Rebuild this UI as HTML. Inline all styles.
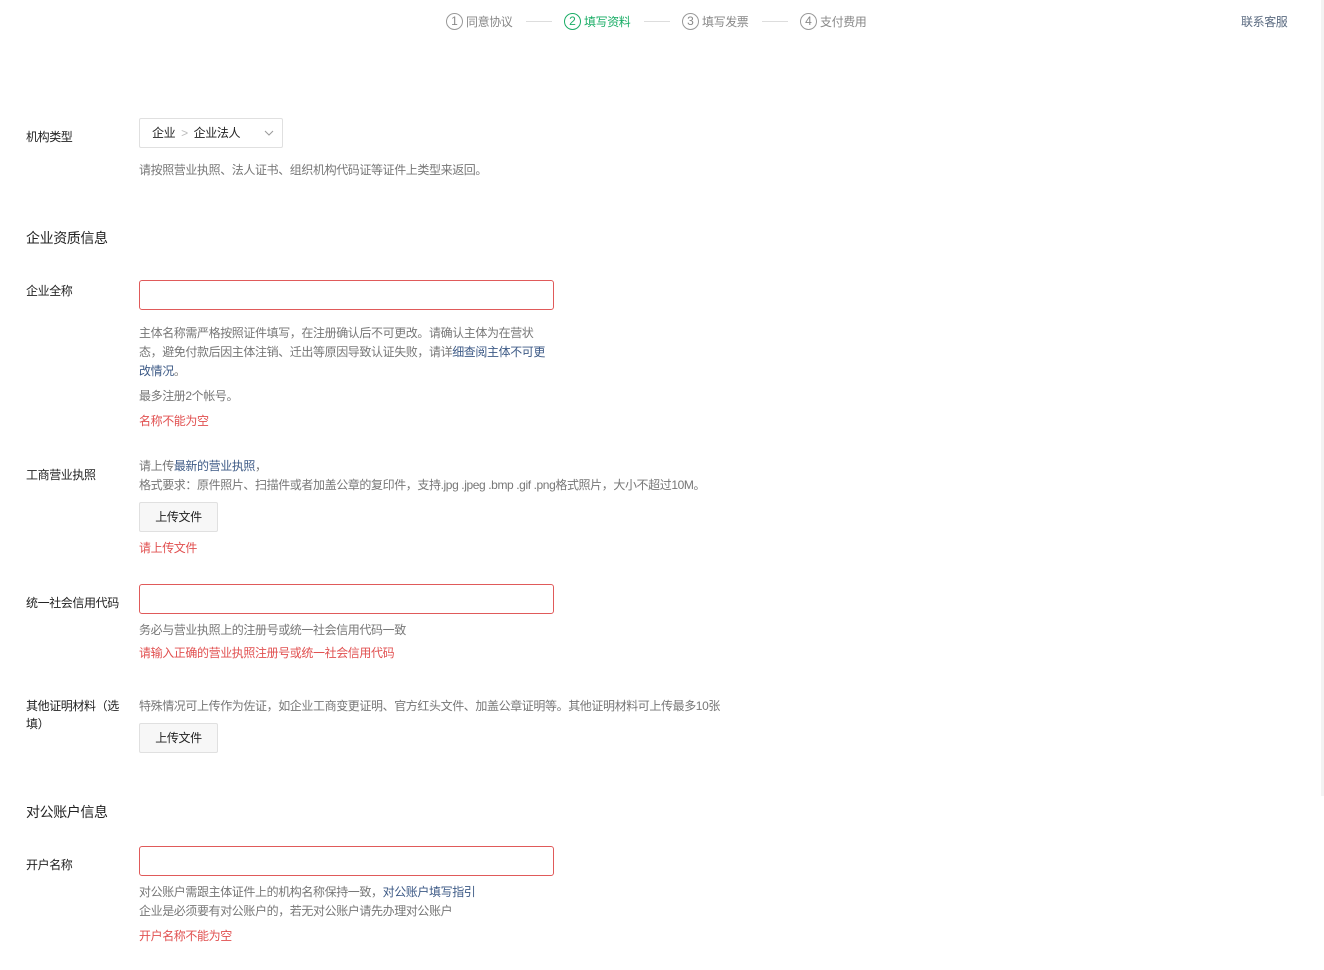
<!DOCTYPE html>
<html><head><meta charset="utf-8">
<style>
*{margin:0;padding:0;box-sizing:border-box}
body{width:1324px;height:970px;background:#fff;position:relative;overflow:hidden;font-family:"Liberation Sans","Noto Sans CJK SC",sans-serif;font-size:12px;color:#353535;letter-spacing:-0.4px}
.a{position:absolute;white-space:nowrap}
.lbl{color:#222;font-size:12px}
.tip{color:#777;font-size:12px}
.err{color:#e15050;font-size:12px}
.h{font-size:14px;color:#222}
.inp{position:absolute;left:139px;width:415px;height:30px;border:1px solid #e05a5a;border-radius:3px}
.btn{position:absolute;left:139px;width:79px;height:30px;border:1px solid #e0e0e0;border-radius:2px;background:#f7f7f7;font-size:12px;color:#222;text-align:center;line-height:28px}
.step{position:absolute;top:13px;font-size:12px;color:#888;display:flex;align-items:center}
.c{display:inline-block;width:17px;height:17px;border:1px solid #999;border-radius:50%;text-align:center;line-height:15px;font-size:12px;margin-right:3px;letter-spacing:0}
.ln{position:absolute;top:21px;width:26px;height:1px;background:#ddd}
.link{color:#3d5a86}
</style></head><body>
<div class="step" style="left:446px"><span class="c">1</span>同意协议</div>
<div class="ln" style="left:526px"></div>
<div class="step" style="left:564px;color:#1aad66"><span class="c" style="border-color:#1aad66">2</span>填写资料</div>
<div class="ln" style="left:644px"></div>
<div class="step" style="left:682px"><span class="c">3</span>填写发票</div>
<div class="ln" style="left:762px"></div>
<div class="step" style="left:800px"><span class="c">4</span>支付费用</div>
<div class="a" style="left:1241px;top:13px;color:#5a6a80;font-size:12px">联系客服</div>
<div class="a" style="left:1321px;top:0;width:3px;height:796px;background:#f3f3f3"></div>

<div class="a lbl" style="left:26px;top:128px">机构类型</div>
<div class="a" style="left:139px;top:118px;width:144px;height:30px;border:1px solid #e0e0e0;border-radius:2px;font-size:12px;color:#222;line-height:28px;padding-left:12px">企业 <span style="color:#bbb;margin:0 3px">&gt;</span> 企业法人
<svg style="position:absolute;right:8px;top:11px" width="10" height="6" viewBox="0 0 10 6"><path d="M1 1L5 5L9 1" fill="none" stroke="#999" stroke-width="1"/></svg></div>
<div class="a tip" style="left:139px;top:161px">请按照营业执照、法人证书、组织机构代码证等证件上类型来返回。</div>

<div class="a h" style="left:26px;top:228px">企业资质信息</div>

<div class="a lbl" style="left:26px;top:282px">企业全称</div>
<div class="inp" style="top:280px"></div>
<div class="a tip" style="left:139px;top:324px;line-height:19px;white-space:normal;width:412px">主体名称需严格按照证件填写，在注册确认后不可更改。请确认主体为在营状态，避免付款后因主体注销、迁出等原因导致认证失败，请详<span class="link">细查阅主体不可更改情况</span>。</div>
<div class="a tip" style="left:139px;top:387px">最多注册2个帐号。</div>
<div class="a err" style="left:139px;top:412px">名称不能为空</div>

<div class="a lbl" style="left:26px;top:466px">工商营业执照</div>
<div class="a tip" style="left:139px;top:457px">请上传<span class="link">最新的营业执照</span>，</div>
<div class="a tip" style="left:139px;top:476px">格式要求：原件照片、扫描件或者加盖公章的复印件，支持.jpg .jpeg .bmp .gif .png格式照片，大小不超过10M。</div>
<div class="btn" style="top:502px">上传文件</div>
<div class="a err" style="left:139px;top:539px">请上传文件</div>

<div class="a lbl" style="left:26px;top:594px">统一社会信用代码</div>
<div class="inp" style="top:584px"></div>
<div class="a tip" style="left:139px;top:621px">务必与营业执照上的注册号或统一社会信用代码一致</div>
<div class="a err" style="left:139px;top:644px">请输入正确的营业执照注册号或统一社会信用代码</div>

<div class="a lbl" style="left:26px;top:697px;line-height:18px;white-space:normal;width:100px">其他证明材料（选填）</div>
<div class="a tip" style="left:139px;top:697px">特殊情况可上传作为佐证，如企业工商变更证明、官方红头文件、加盖公章证明等。其他证明材料可上传最多10张</div>
<div class="btn" style="top:723px">上传文件</div>

<div class="a h" style="left:26px;top:802px">对公账户信息</div>

<div class="a lbl" style="left:26px;top:856px">开户名称</div>
<div class="inp" style="top:846px"></div>
<div class="a tip" style="left:139px;top:883px">对公账户需跟主体证件上的机构名称保持一致，<span class="link">对公账户填写指引</span></div>
<div class="a tip" style="left:139px;top:902px">企业是必须要有对公账户的，若无对公账户请先办理对公账户</div>
<div class="a err" style="left:139px;top:927px">开户名称不能为空</div>
</body></html>
